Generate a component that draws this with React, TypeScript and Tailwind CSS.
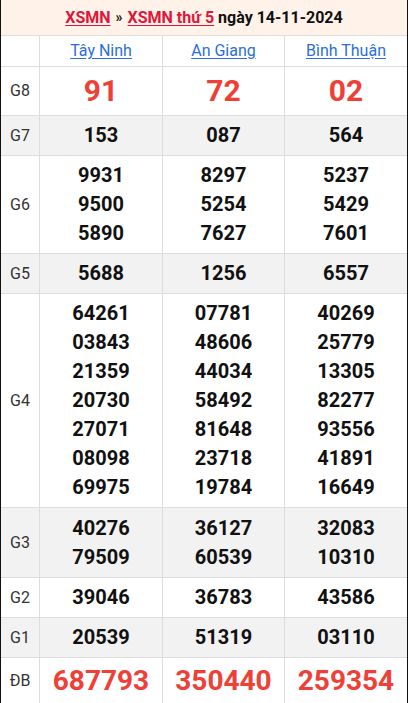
import React from 'react'

type Row = {
  label: string
  values: string[][]
  gray?: boolean
  kind?: 'g8' | 'db'
  extra?: string
}

const provinces = ['Tây Ninh', 'An Giang', 'Bình Thuận']

const rows: Row[] = [
  { label: 'G8', values: [['91'], ['72'], ['02']], kind: 'g8' },
  { label: 'G7', values: [['153'], ['087'], ['564']], gray: true },
  {
    label: 'G6',
    values: [
      ['9931', '9500', '5890'],
      ['8297', '5254', '7627'],
      ['5237', '5429', '7601'],
    ],
  },
  { label: 'G5', values: [['5688'], ['1256'], ['6557']], gray: true },
  {
    label: 'G4',
    values: [
      ['64261', '03843', '21359', '20730', '27071', '08098', '69975'],
      ['07781', '48606', '44034', '58492', '81648', '23718', '19784'],
      ['40269', '25779', '13305', '82277', '93556', '41891', '16649'],
    ],
  },
  {
    label: 'G3',
    values: [
      ['40276', '79509'],
      ['36127', '60539'],
      ['32083', '10310'],
    ],
    gray: true,
    extra: 'pt-[6px]',
  },
  { label: 'G2', values: [['39046'], ['36783'], ['43586']] },
  { label: 'G1', values: [['20539'], ['51319'], ['03110']], gray: true },
  { label: 'ĐB', values: [['687793'], ['350440'], ['259354']], kind: 'db' },
]

function Cell({ nums, kind, extra }: { nums: string[]; kind?: Row['kind']; extra?: string }) {
  if (kind === 'g8') {
    return (
      <div className="flex items-center justify-center text-[30px] font-bold leading-[48px] text-[#ee4036]">
        {nums[0]}
      </div>
    )
  }
  if (kind === 'db') {
    return (
      <div className="flex items-center justify-center text-[28px] font-bold leading-[45px] text-[#ee4036]">
        {nums[0]}
      </div>
    )
  }
  return (
    <div className={`flex flex-col items-center justify-center py-[5px] text-[20px] font-bold leading-[29px] text-[#111] ${extra ?? ''}`}>
      {nums.map((n) => (
        <span key={n}>{n}</span>
      ))}
    </div>
  )
}

export default function App() {
  return (
    <div className="w-[408px] bg-white font-['Roboto',sans-serif]">
      <div className="border-x border-b border-[#111]">
        {/* title */}
        <div className="flex h-[36px] items-center justify-center border-b border-[#dddddd] bg-[#fff3e9] text-[16px] font-bold text-[#111]">
          <a href="#" className="text-[#e0163b] underline underline-offset-2">XSMN</a>
          <span className="mx-[5px] text-[14px]">»</span>
          <a href="#" className="text-[#e0163b] underline underline-offset-2">XSMN thứ 5</a>
          <span className="ml-[4px]">ngày 14-11-2024</span>
        </div>

        {/* province names */}
        <div className="grid grid-cols-[39px_123px_122px_122px] border-b border-[#dddddd]">
          <div className="h-[30px] border-r border-[#dddddd]" />
          {provinces.map((p, i) => (
            <div
              key={p}
              className={`flex h-[30px] items-center justify-center text-[16px] ${i < 2 ? 'border-r border-[#dddddd]' : ''}`}
            >
              <a href="#" className="text-[#2a6ee0] underline underline-offset-2">{p}</a>
            </div>
          ))}
        </div>

        {rows.map((r, ri) => (
          <div
            key={r.label}
            className={`grid grid-cols-[39px_123px_122px_122px] ${ri < rows.length - 1 ? 'border-b border-[#dddddd]' : ''} ${r.gray ? 'bg-[#f2f2f2]' : 'bg-white'}`}
          >
            <div className="flex items-center justify-center border-r border-[#dddddd] text-[16px] text-[#333]">
              {r.label}
            </div>
            {r.values.map((v, i) => (
              <div key={i} className={i < 2 ? 'border-r border-[#dddddd]' : ''}>
                <Cell nums={v} kind={r.kind} extra={r.extra} />
              </div>
            ))}
          </div>
        ))}
      </div>
    </div>
  )
}
